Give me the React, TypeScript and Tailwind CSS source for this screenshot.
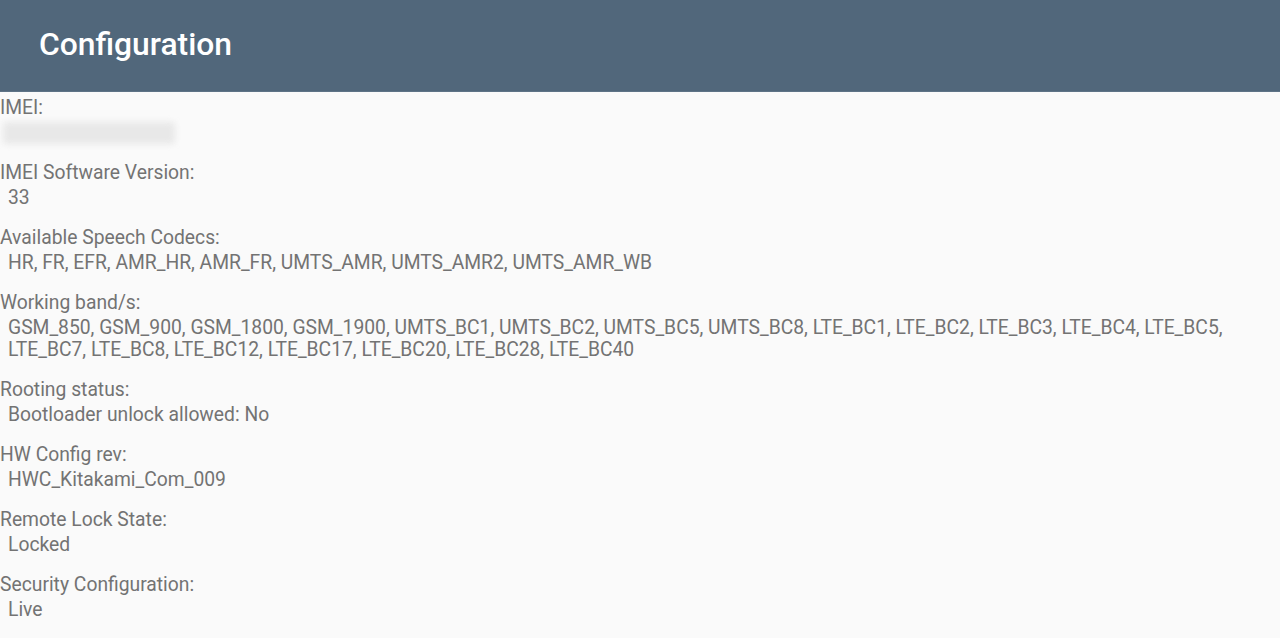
const items: { label: string; value: React.ReactNode }[] = [
  { label: "IMEI:", value: null },
  { label: "IMEI Software Version:", value: "33" },
  {
    label: "Available Speech Codecs:",
    value: "HR, FR, EFR, AMR_HR, AMR_FR, UMTS_AMR, UMTS_AMR2, UMTS_AMR_WB",
  },
  {
    label: "Working band/s:",
    value: (
      <>
        GSM_850, GSM_900, GSM_1800, GSM_1900, UMTS_BC1, UMTS_BC2, UMTS_BC5, UMTS_BC8, LTE_BC1, LTE_BC2, LTE_BC3, LTE_BC4, LTE_BC5,
        <br />
        LTE_BC7, LTE_BC8, LTE_BC12, LTE_BC17, LTE_BC20, LTE_BC28, LTE_BC40
      </>
    ),
  },
  { label: "Rooting status:", value: "Bootloader unlock allowed: No" },
  { label: "HW Config rev:", value: "HWC_Kitakami_Com_009" },
  { label: "Remote Lock State:", value: "Locked" },
  { label: "Security Configuration:", value: "Live" },
];

export default function App() {
  return (
    <div className="w-[1280px] h-[638px] overflow-hidden bg-[#fafafa] font-['Roboto',sans-serif]">
      <header className="h-[92px] bg-[#51677b] flex items-center pl-[39px] border-b border-[#5e7386]">
        <h1 className="text-white text-[31.8px] font-medium -mt-[2px]">Configuration</h1>
      </header>
      <main className="pt-[5px] text-[#737373] text-[19.3px] leading-[22px]">
        {items.map((item) => (
          <div key={item.label} className="mb-[18px] last:mb-0">
            <div>{item.label}</div>
            <div className="mt-[3px] pl-[8px] whitespace-nowrap">
              {item.value ?? (
                <div className="h-[22px] flex items-center">
                  <div className="-ml-[5px] w-[172px] h-[22px] bg-[#e8e8e8] blur-[3px] rounded" />
                </div>
              )}
            </div>
          </div>
        ))}
      </main>
    </div>
  );
}
